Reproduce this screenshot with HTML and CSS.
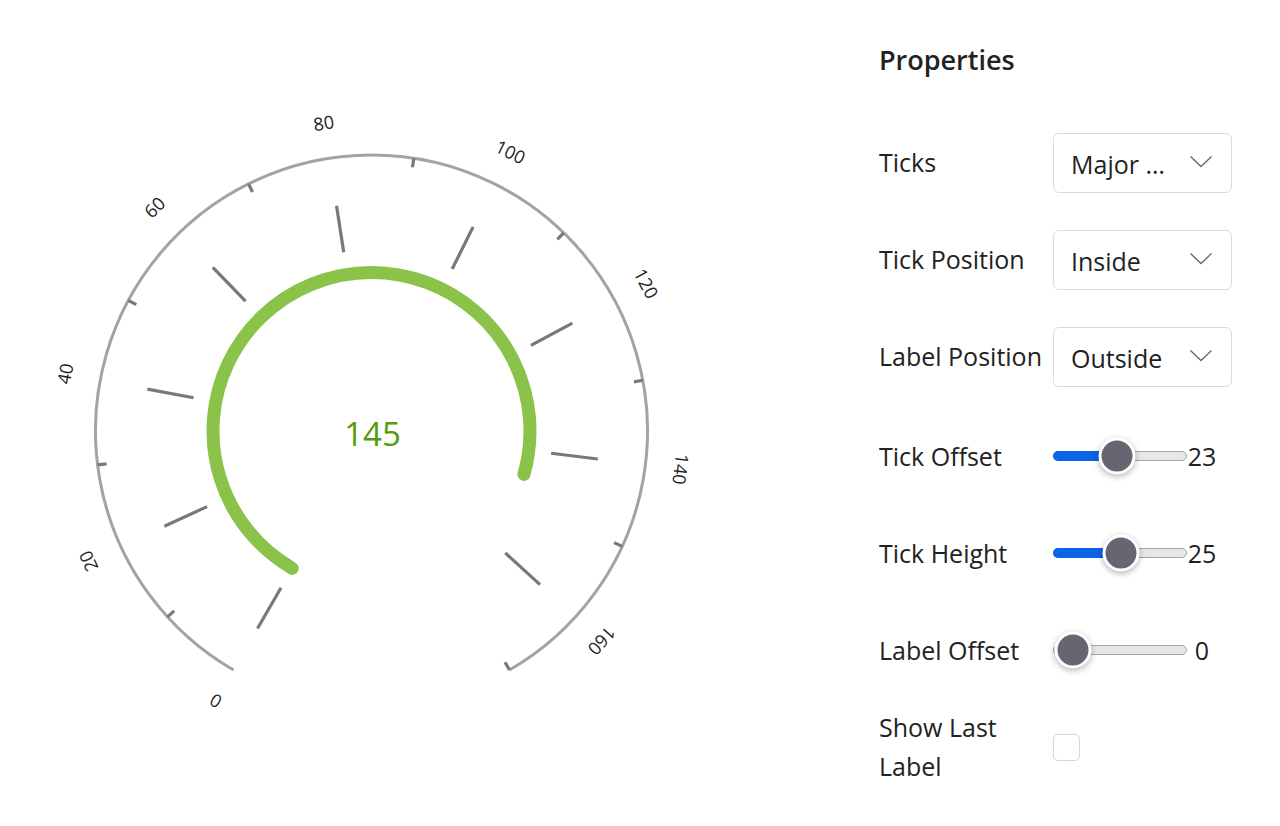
FILE: index.html
```html
<!DOCTYPE html>
<html lang="en">
<head>
<meta charset="utf-8">
<title>Radial Gauge Ticks</title>
<link rel="stylesheet" href="styles.css">
</head>
<body>
<div class="page">
  <div class="gauge-area">
    <svg class="gauge" width="879" height="826" viewBox="0 0 879 826">
      <g transform="translate(371.5 431)">
        <path class="scale" d="M -138 239.02 A 276 276 0 1 1 138 239.02"/>
        <g class="minor">
          <line x1="267" y1="0" x2="276" y2="0" transform="rotate(137.647)"/>
          <line x1="267" y1="0" x2="276" y2="0" transform="rotate(172.941)"/>
          <line x1="267" y1="0" x2="276" y2="0" transform="rotate(208.235)"/>
          <line x1="267" y1="0" x2="276" y2="0" transform="rotate(243.529)"/>
          <line x1="267" y1="0" x2="276" y2="0" transform="rotate(278.824)"/>
          <line x1="267" y1="0" x2="276" y2="0" transform="rotate(314.118)"/>
          <line x1="267" y1="0" x2="276" y2="0" transform="rotate(349.412)"/>
          <line x1="267" y1="0" x2="276" y2="0" transform="rotate(384.706)"/>
          <line x1="267" y1="0" x2="276" y2="0" transform="rotate(420)"/>
        </g>
        <g class="major">
          <line x1="181" y1="0" x2="228" y2="0" transform="rotate(120)"/>
          <line x1="181" y1="0" x2="228" y2="0" transform="rotate(155.294)"/>
          <line x1="181" y1="0" x2="228" y2="0" transform="rotate(190.588)"/>
          <line x1="181" y1="0" x2="228" y2="0" transform="rotate(225.882)"/>
          <line x1="181" y1="0" x2="228" y2="0" transform="rotate(261.176)"/>
          <line x1="181" y1="0" x2="228" y2="0" transform="rotate(296.471)"/>
          <line x1="181" y1="0" x2="228" y2="0" transform="rotate(331.765)"/>
          <line x1="181" y1="0" x2="228" y2="0" transform="rotate(367.059)"/>
          <line x1="181" y1="0" x2="228" y2="0" transform="rotate(402.353)"/>
        </g>
        <g class="labels">
          <text transform="rotate(120) translate(312 0) rotate(90)">0</text>
          <text transform="rotate(155.294) translate(312 0) rotate(90)">20</text>
          <text transform="rotate(190.588) translate(312 0) rotate(90)">40</text>
          <text transform="rotate(225.882) translate(312 0) rotate(90)">60</text>
          <text transform="rotate(261.176) translate(312 0) rotate(90)">80</text>
          <text transform="rotate(296.471) translate(312 0) rotate(90)">100</text>
          <text transform="rotate(331.765) translate(312 0) rotate(90)">120</text>
          <text transform="rotate(367.059) translate(312 0) rotate(90)">140</text>
          <text transform="rotate(402.353) translate(312 0) rotate(90)">160</text>
        </g>
        <path class="progress" d="M -79.25 137.27 A 158.5 158.5 0 1 1 152.45 43.37"/>
        <text class="value-text" x="1" y="2">145</text>
      </g>
    </svg>
  </div>
  <aside class="panel">
    <h2 class="title">Properties</h2>
    <div class="rows">
      <div class="row">
        <span class="label">Ticks</span>
        <div class="select">
          <span class="select-text">Major …</span>
          <svg class="chev" width="24" height="13" viewBox="0 0 24 13"><polyline points="1.5,1.5 12,11.5 22.5,1.5"/></svg>
        </div>
      </div>
      <div class="row">
        <span class="label">Tick Position</span>
        <div class="select">
          <span class="select-text">Inside</span>
          <svg class="chev" width="24" height="13" viewBox="0 0 24 13"><polyline points="1.5,1.5 12,11.5 22.5,1.5"/></svg>
        </div>
      </div>
      <div class="row">
        <span class="label">Label Position</span>
        <div class="select">
          <span class="select-text">Outside</span>
          <svg class="chev" width="24" height="13" viewBox="0 0 24 13"><polyline points="1.5,1.5 12,11.5 22.5,1.5"/></svg>
        </div>
      </div>
      <div class="row row-low">
        <span class="label">Tick Offset</span>
        <div class="slider">
          <div class="track">
            <div class="fill" style="width:63px"></div>
            <div class="thumb" style="left:63px"></div>
          </div>
          <span class="value">23</span>
        </div>
      </div>
      <div class="row row-low">
        <span class="label">Tick Height</span>
        <div class="slider">
          <div class="track">
            <div class="fill" style="width:67px"></div>
            <div class="thumb" style="left:67px"></div>
          </div>
          <span class="value">25</span>
        </div>
      </div>
      <div class="row row-low">
        <span class="label">Label Offset</span>
        <div class="slider">
          <div class="track">
            <div class="fill" style="width:0px"></div>
            <div class="thumb" style="left:18.5px"></div>
          </div>
          <span class="value">0</span>
        </div>
      </div>
      <div class="row row-low">
        <span class="label">Show Last Label</span>
        <span class="checkbox"></span>
      </div>
    </div>
  </aside>
</div>
</body>
</html>
```

FILE: styles.css
```css
html, body {
  margin: 0;
  padding: 0;
  background: #ffffff;
}

body {
  font-family: "Open Sans", "Noto Sans", "Liberation Sans", sans-serif;
  color: #1f1f1f;
}

.page {
  display: flex;
  width: 1280px;
  height: 826px;
  overflow: hidden;
}

.gauge-area {
  flex: none;
  width: 879px;
}

.gauge {
  display: block;
}

.scale {
  fill: none;
  stroke: #a3a3a3;
  stroke-width: 3;
}

.minor line,
.major line {
  stroke: #787878;
  stroke-width: 3.2;
}

.labels text {
  font-family: "Open Sans", "Noto Sans", sans-serif;
  font-size: 18px;
  fill: #222222;
  text-anchor: middle;
  dominant-baseline: central;
}

.progress {
  fill: none;
  stroke: #8bc34a;
  stroke-width: 13;
  stroke-linecap: round;
}

.value-text {
  font-family: "Open Sans", "Noto Sans", sans-serif;
  font-size: 33px;
  fill: #529b0c;
  text-anchor: middle;
  dominant-baseline: central;
}

.panel {
  flex: none;
  width: 401px;
  padding-top: 40px;
  box-sizing: border-box;
}

.title {
  margin: 0;
  font-size: 27px;
  font-weight: 600;
  line-height: 40px;
  color: #222222;
}

.rows {
  margin-top: 34px;
  display: flex;
  flex-direction: column;
}

.row {
  height: 97px;
  display: flex;
  align-items: center;
  box-sizing: border-box;
}

.row-low {
  padding-top: 5px;
}

.label {
  flex: none;
  width: 174px;
  font-size: 25px;
  line-height: 39px;
  color: #222222;
}

.select {
  flex: none;
  width: 179px;
  height: 60px;
  box-sizing: border-box;
  border: 1px solid #dadada;
  border-radius: 6px;
  display: flex;
  align-items: center;
  justify-content: space-between;
  padding: 0 18px 0 17px;
}

.select-text {
  font-size: 25px;
  line-height: 34px;
  padding-top: 2px;
  color: #1f1f1f;
  white-space: nowrap;
}

.chev {
  display: block;
  margin-top: -2px;
}

.chev polyline {
  fill: none;
  stroke: #6b6b6b;
  stroke-width: 1.4;
}

.slider {
  display: flex;
  align-items: center;
}

.track {
  position: relative;
  width: 134px;
  height: 10px;
  box-sizing: border-box;
  border: 1px solid #a6a6a6;
  border-radius: 5px;
  background: #e7e7e7;
}

.fill {
  position: absolute;
  left: -1px;
  top: -1px;
  bottom: -1px;
  background: #0b63e6;
  border-radius: 5px;
}

.thumb {
  position: absolute;
  top: 50%;
  width: 37px;
  height: 37px;
  box-sizing: border-box;
  border: 3px solid #ffffff;
  border-radius: 50%;
  background: #666673;
  box-shadow: 0 2px 6px rgba(0, 0, 0, 0.3);
  transform: translate(-50%, -50%);
}

.value {
  width: 30px;
  text-align: center;
  font-size: 25px;
  line-height: 39px;
  color: #1f1f1f;
}

.checkbox {
  display: block;
  width: 27px;
  height: 27px;
  box-sizing: border-box;
  border: 1px solid #d6d6d6;
  border-radius: 5px;
  background: #ffffff;
}
```
